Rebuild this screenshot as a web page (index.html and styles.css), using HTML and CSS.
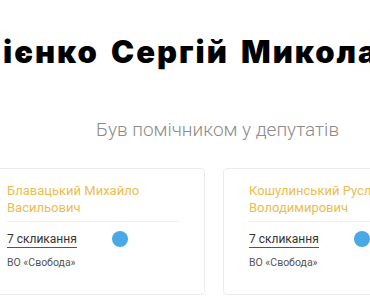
FILE: index.html
```html
<!DOCTYPE html>
<html lang="uk">
<head>
<meta charset="utf-8">
<link rel="stylesheet" href="styles.css">
</head>
<body>
<div class="page">
  <h1 class="title">ієнко Сергій Миколайович</h1>
  <h2 class="subtitle">Був помічником у депутатів</h2>
  <div class="cards">
    <div class="card">
      <div class="name">Блавацький Михайло Васильович</div>
      <div class="row">
        <span class="conv">7 скликання</span>
        <span class="dot"></span>
      </div>
      <div class="party">ВО «Свобода»</div>
    </div>
    <div class="card">
      <div class="name">Кошулинський Руслан Володимирович</div>
      <div class="row">
        <span class="conv">7 скликання</span>
        <span class="dot"></span>
      </div>
      <div class="party">ВО «Свобода»</div>
    </div>
  </div>
</div>
</body>
</html>
```

FILE: styles.css
```css
html, body {
  margin: 0;
  padding: 0;
  background: #fff;
  overflow: hidden;
}
body {
  width: 370px;
  height: 300px;
  font-family: Roboto, "Liberation Sans", Arial, sans-serif;
}
.page {
  width: 600px;
}
.title {
  margin: 0;
  padding: 34px 0 0 3px;
  font-family: Inter, "Liberation Sans", sans-serif;
  font-weight: 900;
  font-size: 31px;
  line-height: 36px;
  letter-spacing: 2px;
  word-spacing: 4px;
  white-space: nowrap;
  color: #000;
}
.subtitle {
  margin: 0;
  padding: 0 0 0 96px;
  margin-top: 48px;
  font-weight: 300;
  font-size: 19px;
  line-height: 24px;
  color: #8c8c8c;
  white-space: nowrap;
}
.cards {
  display: grid;
  grid-template-columns: 224px 224px;
  column-gap: 18px;
  margin-left: -19px;
  margin-top: 26px;
}
.card {
  border: 1px solid #ececec;
  border-radius: 4px;
  padding: 13px 24px 0 25px;
  height: 127px;
  box-sizing: border-box;
}
.name {
  font-size: 13px;
  line-height: 17px;
  color: #ecbd4f;
  padding-bottom: 5px;
  border-bottom: 1px solid #eeeeee;
}
.row {
  display: flex;
  align-items: center;
  margin-top: 7px;
  height: 20px;
}
.conv {
  font-size: 12px;
  line-height: 16px;
  color: #333;
  border-bottom: 1px solid #555;
  white-space: nowrap;
}
.dot {
  width: 16px;
  height: 16px;
  border-radius: 50%;
  background: #49a9e6;
  margin-left: 35px;
}
.party {
  margin-top: 7px;
  font-size: 10.5px;
  line-height: 14px;
  color: #555;
}
```
